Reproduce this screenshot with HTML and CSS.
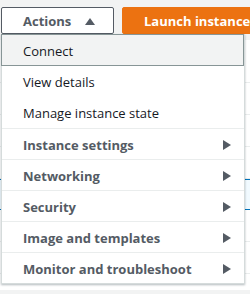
FILE: index.html
```html
<!DOCTYPE html>
<html>
  <head>
    <meta charset="utf-8">
    <title>Instances</title>
    <link rel="stylesheet" href="styles.css">
  </head>
  <body>
    <div class="page">
      <div class="toolbar">
        <button class="btn actions">Actions <span class="caret-up"></span></button>
        <button class="btn launch">Launch instances</button>
      </div>
      <div class="table">
        <div class="row"></div>
        <div class="row"></div>
        <div class="row"></div>
        <div class="row"></div>
        <div class="row selected"></div>
        <div class="row"></div>
        <div class="row"></div>
      </div>

      <ul class="menu">
        <li class="item active">Connect</li>
        <li class="item">View details</li>
        <li class="item">Manage instance state</li>
        <li class="item sub">Instance settings <span class="caret-right"></span></li>
        <li class="item sub">Networking <span class="caret-right"></span></li>
        <li class="item sub">Security <span class="caret-right"></span></li>
        <li class="item sub">Image and templates <span class="caret-right"></span></li>
        <li class="item sub">Monitor and troubleshoot <span class="caret-right"></span></li>
      </ul>
    </div>
  </body>
</html>
```

FILE: styles.css
```css
:root {
  --page-bg: #f2f3f3;
  --text-dark: #16191f;
  --text-grey: #545b64;
  --border-light: #eaeded;
  --orange: #ec7211;
  --blue: #0073bb;
}

*, *:before, *:after {
  box-sizing: border-box;
}

body {
  margin: 0;
  background: var(--page-bg);
  font-family: "Open Sans", "Noto Sans", sans-serif;
  font-size: 13px;
  color: var(--text-dark);
  overflow: hidden;
}

.page {
  position: relative;
  height: 294px;
  overflow: hidden;
}

/*----- TOOLBAR -----*/

.toolbar {
  display: flex;
  gap: 8px;
  padding: 7px 0 0 1px;
  overflow: hidden;
}

.btn {
  flex: 0 0 auto;
  height: 27px;
  border: 1px solid var(--text-grey);
  font-family: inherit;
  font-size: 13px;
  font-weight: bold;
  padding: 0 0 0 21px;
  text-align: left;
  white-space: nowrap;
  border-radius: 2px;
}

.btn.actions {
  width: 113px;
  background: #fff;
  color: var(--text-grey);
}

.btn.launch {
  width: 200px;
  background: var(--orange);
  border-color: var(--orange);
  color: #fff;
}

.caret-up {
  display: inline-block;
  vertical-align: 1px;
  margin-left: 10px;
  width: 0;
  height: 0;
  border-left: 5px solid transparent;
  border-right: 5px solid transparent;
  border-bottom: 7px solid var(--text-grey);
}

/*----- TABLE BEHIND -----*/

.table {
  margin-top: 6px;
  background: #fff;
  height: 250px;
  padding-top: 11px;
}

.row {
  height: 32px;
  border-bottom: 1px solid var(--border-light);
}

.row.selected {
  height: 31px;
  background: #f1faff;
  border-top: 1px solid var(--blue);
  border-bottom: 1px solid var(--blue);
}

/*----- MENU -----*/

.menu {
  position: absolute;
  top: 34px;
  left: 1px;
  width: 244px;
  margin: 0;
  padding: 0;
  list-style: none;
  background: #fff;
  border: 1px solid #d5dbdb;
  border-top: none;
  box-shadow: 0 1px 2px rgba(0, 28, 36, 0.3);
}

.item {
  height: 31px;
  display: flex;
  align-items: center;
  padding: 1px 13px 0 21px;
}

.item.active {
  height: 32px;
  background: var(--page-bg);
  border: 1px solid #879596;
  margin: 0 0 0 -1px;
  width: 243px;
}

.item.sub {
  border-top: 1px solid var(--border-light);
  font-weight: bold;
  color: var(--text-grey);
}

.caret-right {
  margin-left: auto;
  width: 0;
  height: 0;
  border-top: 5px solid transparent;
  border-bottom: 5px solid transparent;
  border-left: 8px solid var(--text-grey);
}
```
